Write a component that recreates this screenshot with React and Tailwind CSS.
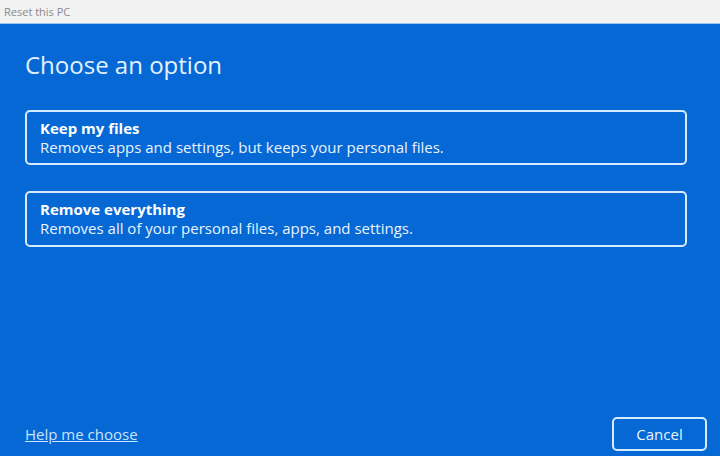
export default function App() {
  return (
    <div className="w-[720px] h-[456px] flex flex-col overflow-hidden" style={{ fontFamily: '"Open Sans", "Noto Sans", sans-serif' }}>
      <div className="h-[24px] shrink-0 bg-[#f2f2f2] border-b border-[#9cc6ee] flex items-center px-[4px]">
        <span className="text-[11px] text-[#8a8a8a] leading-none">Reset this PC</span>
      </div>
      <div className="flex-1 bg-[#0568d4] flex flex-col px-[25px] pt-[26px] pb-[5px]">
        <h1 className="text-[24px] leading-[30px] text-[#e4f1ff] font-normal">Choose an option</h1>
        <div className="flex flex-col gap-[26px] mt-[30px] pr-[8px]">
          <div className="border-2 border-[#d6ebff] rounded-[5px] h-[55px] px-[13px] flex flex-col justify-center">
            <div className="text-[15px] font-bold text-white leading-[19px]">Keep my files</div>
            <div className="text-[15px] text-[#eaf4ff] leading-[19px]">Removes apps and settings, but keeps your personal files.</div>
          </div>
          <div className="border-2 border-[#d6ebff] rounded-[5px] h-[56px] px-[13px] flex flex-col justify-center">
            <div className="text-[15px] font-bold text-white leading-[19px]">Remove everything</div>
            <div className="text-[15px] text-[#eaf4ff] leading-[19px]">Removes all of your personal files, apps, and settings.</div>
          </div>
        </div>
        <div className="mt-auto flex items-end justify-between">
          <a className="text-[15px] text-[#c8e4ff] underline mb-[6px]">Help me choose</a>
          <button className="w-[95px] h-[34px] border-2 border-[#d6ebff] rounded-[5px] text-[15px] text-[#eaf4ff] mr-[-12px]">Cancel</button>
        </div>
      </div>
    </div>
  );
}
